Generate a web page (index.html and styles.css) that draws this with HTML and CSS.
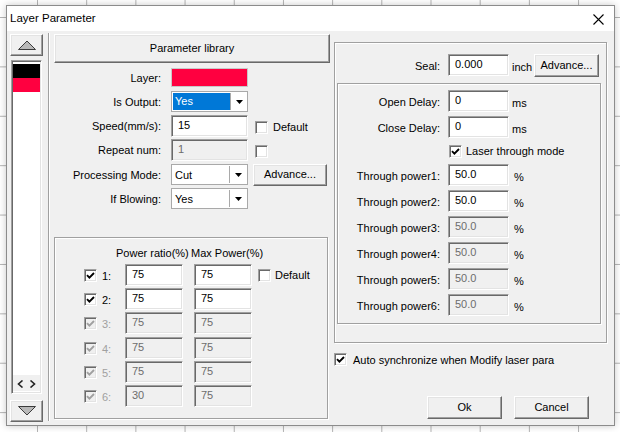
FILE: index.html
```html
<!DOCTYPE html>
<html>
<head>
<meta charset="utf-8">
<title>Layer Parameter</title>
<link rel="stylesheet" href="styles.css">
</head>
<body>
<div class="dialog">
  <div class="titlebar">
    <span class="title">Layer Parameter</span>
    <svg class="close" width="11" height="11" viewBox="0 0 11 11"><path d="M0.5 0.5 L10.5 10.5 M10.5 0.5 L0.5 10.5" stroke="#000" stroke-width="1.1" fill="none"/></svg>
  </div>
  <div class="body">
    <div class="layers">
      <div class="btn arrowbtn"><svg width="20" height="10" viewBox="0 0 20 10"><path d="M1.5 9.5 L10 1 L18.5 9.5 Z" fill="#b9b9b9" stroke="#3c3c3c" stroke-width="1"/></svg></div>
      <div class="layerlist sunk">
        <div class="lyr lyr-black"></div>
        <div class="lyr lyr-red"></div>
        <div class="lspace"></div>
        <div class="hscroll">
          <svg width="7" height="8" viewBox="0 0 7 8"><path d="M5.5 0.5 L1.5 4 L5.5 7.5" stroke="#222" stroke-width="1.6" fill="none"/></svg>
          <svg width="7" height="8" viewBox="0 0 7 8"><path d="M1.5 0.5 L5.5 4 L1.5 7.5" stroke="#222" stroke-width="1.6" fill="none"/></svg>
        </div>
      </div>
      <div class="btn arrowbtn down"><svg width="20" height="10" viewBox="0 0 20 10"><path d="M1.5 0.5 L10 9 L18.5 0.5 Z" fill="#b9b9b9" stroke="#3c3c3c" stroke-width="1"/></svg></div>
    </div>

    <div class="vsep"></div>

    <div class="mid">
      <div class="btn libbtn">Parameter library</div>
      <div class="form">
        <div class="row"><span class="lbl">Layer:</span><span class="swatch"></span></div>
        <div class="row"><span class="lbl">Is Output:</span>
          <div class="combo"><span class="ctext"><span class="sel">Yes</span></span><span class="cbtn"><svg width="7" height="4" viewBox="0 0 7 4"><path d="M0 0 H7 L3.5 4 Z" fill="#000"/></svg></span></div>
        </div>
        <div class="row"><span class="lbl">Speed(mm/s):</span><span class="field sunk">15</span>
          <span class="chk sunk ml7"></span><span class="ctl">Default</span></div>
        <div class="row"><span class="lbl">Repeat num:</span><span class="field sunk dis">1</span>
          <span class="chk sunk ml7"></span></div>
        <div class="row"><span class="lbl">Processing Mode:</span>
          <div class="combo"><span class="ctext">Cut</span><span class="cbtn"><svg width="7" height="4" viewBox="0 0 7 4"><path d="M0 0 H7 L3.5 4 Z" fill="#000"/></svg></span></div>
          <span class="btn advbtn">Advance...</span>
        </div>
        <div class="row"><span class="lbl">If Blowing:</span>
          <div class="combo"><span class="ctext">Yes</span><span class="cbtn"><svg width="7" height="4" viewBox="0 0 7 4"><path d="M0 0 H7 L3.5 4 Z" fill="#000"/></svg></span></div>
        </div>
      </div>

      <div class="group power">
        <div class="phdr"><span class="ph1">Power ratio(%)</span><span>Max Power(%)</span></div>
        <div class="prows">
          <div class="prow"><span class="chk sunk on"><svg viewBox="0 0 9 9" width="9" height="9"><path d="M1 4.2 L3.4 6.6 L8 2" fill="none" stroke="currentColor" stroke-width="1.9"/></svg></span><span class="num">1:</span><span class="pf sunk">75</span><span class="pf sunk pf2">75</span><span class="chk sunk ml6"></span><span class="ctl4">Default</span></div>
          <div class="prow"><span class="chk sunk on"><svg viewBox="0 0 9 9" width="9" height="9"><path d="M1 4.2 L3.4 6.6 L8 2" fill="none" stroke="currentColor" stroke-width="1.9"/></svg></span><span class="num">2:</span><span class="pf sunk">75</span><span class="pf sunk pf2">75</span></div>
          <div class="prow off"><span class="chk sunk on"><svg viewBox="0 0 9 9" width="9" height="9"><path d="M1 4.2 L3.4 6.6 L8 2" fill="none" stroke="currentColor" stroke-width="1.9"/></svg></span><span class="num">3:</span><span class="pf sunk">75</span><span class="pf sunk pf2">75</span></div>
          <div class="prow off"><span class="chk sunk on"><svg viewBox="0 0 9 9" width="9" height="9"><path d="M1 4.2 L3.4 6.6 L8 2" fill="none" stroke="currentColor" stroke-width="1.9"/></svg></span><span class="num">4:</span><span class="pf sunk">75</span><span class="pf sunk pf2">75</span></div>
          <div class="prow off"><span class="chk sunk on"><svg viewBox="0 0 9 9" width="9" height="9"><path d="M1 4.2 L3.4 6.6 L8 2" fill="none" stroke="currentColor" stroke-width="1.9"/></svg></span><span class="num">5:</span><span class="pf sunk">75</span><span class="pf sunk pf2">75</span></div>
          <div class="prow off"><span class="chk sunk on"><svg viewBox="0 0 9 9" width="9" height="9"><path d="M1 4.2 L3.4 6.6 L8 2" fill="none" stroke="currentColor" stroke-width="1.9"/></svg></span><span class="num">6:</span><span class="pf sunk">30</span><span class="pf sunk pf2">75</span></div>
        </div>
      </div>
    </div>

    <div class="right">
      <div class="group outer">
        <div class="sealrow"><span class="rlbl seal">Seal:</span><span class="rf sunk">0.000</span><span class="unit">inch</span><span class="btn adv2">Advance...</span></div>
        <div class="group inner">
          <div class="rrow"><span class="rlbl">Open Delay:</span><span class="rf sunk">0</span><span class="u3">ms</span></div>
          <div class="rrow"><span class="rlbl">Close Delay:</span><span class="rf sunk">0</span><span class="u3">ms</span></div>
          <div class="crow"><span class="chk sunk on"><svg viewBox="0 0 9 9" width="9" height="9"><path d="M1 4.2 L3.4 6.6 L8 2" fill="none" stroke="currentColor" stroke-width="1.9"/></svg></span><span class="ctl4">Laser through mode</span></div>
          <div class="rrow"><span class="rlbl">Through power1:</span><span class="rf sunk">50.0</span><span class="u5">%</span></div>
          <div class="rrow"><span class="rlbl">Through power2:</span><span class="rf sunk">50.0</span><span class="u5">%</span></div>
          <div class="rrow"><span class="rlbl">Through power3:</span><span class="rf sunk dis">50.0</span><span class="u5">%</span></div>
          <div class="rrow"><span class="rlbl">Through power4:</span><span class="rf sunk dis">50.0</span><span class="u5">%</span></div>
          <div class="rrow"><span class="rlbl">Through power5:</span><span class="rf sunk dis">50.0</span><span class="u5">%</span></div>
          <div class="rrow"><span class="rlbl">Through power6:</span><span class="rf sunk dis">50.0</span><span class="u5">%</span></div>
        </div>
      </div>
      <div class="autorow"><span class="chk sunk on"><svg viewBox="0 0 9 9" width="9" height="9"><path d="M1 4.2 L3.4 6.6 L8 2" fill="none" stroke="currentColor" stroke-width="1.9"/></svg></span><span class="ctl6">Auto synchronize when Modify laser para</span></div>
      <div class="btnrow"><span class="btn okbtn">Ok</span><span class="btn okbtn">Cancel</span></div>
    </div>
  </div>
</div>
</body>
</html>
```
FILE: styles.css
```css
* { box-sizing: border-box; }
html, body { margin: 0; padding: 0; }
body {
  width: 620px;
  height: 432px;
  overflow: hidden;
  position: relative;
  font-family: "Liberation Sans", Arial, sans-serif;
  font-size: 11px;
  color: #000;
  background-color: #fff;
  background-image:
    linear-gradient(to right, #b4b4b4 1px, transparent 1px),
    linear-gradient(to bottom, #b4b4b4 1px, transparent 1px);
  background-size: 49.2px 100%, 100% 49.4px;
  background-position: 37px 0, 0 17px;
}

.dialog {
  position: absolute;
  left: 6px;
  top: 5px;
  width: 609px;
  height: 421px;
  border: 1px solid #8c8c8c;
  background: #f0f0f0;
  box-shadow: 0 0 7px rgba(0,0,0,0.22);
  display: flex;
  flex-direction: column;
}
.titlebar {
  height: 25px;
  flex: none;
  background: #fff;
  display: flex;
  align-items: center;
  justify-content: space-between;
  padding: 0 10px 0 3px;
}
.title { font-size: 11.5px; padding-bottom: 1px; }
.close { display: block; margin-top: 1px; }

.body {
  flex: 1;
  display: flex;
  padding: 3px 0 0 3px;
}

/* 3D styles */
.sunk {
  border-style: solid;
  border-width: 1px;
  border-color: #a0a0a0 #fff #fff #a0a0a0;
  box-shadow: inset 1px 1px 0 #696969, inset -1px -1px 0 #e3e3e3;
  background: #fff;
}
.btn {
  border-style: solid;
  border-width: 1px;
  border-color: #fff #696969 #696969 #fff;
  box-shadow: inset -1px -1px 0 #a0a0a0, inset 1px 1px 0 #e3e3e3;
  background: #f0f0f0;
  display: flex;
  align-items: center;
  justify-content: center;
  flex: none;
}
.group {
  border: 1px solid #a0a0a0;
  box-shadow: inset 1px 1px 0 #fff, 1px 1px 0 #fff;
}

/* left layer strip */
.layers {
  width: 33px;
  flex: none;
  display: flex;
  flex-direction: column;
}
.arrowbtn { height: 22px; }
.arrowbtn svg { display: block; }
.arrowbtn.down { margin-top: 6px; }
.layerlist {
  margin: 4px 1px 0;
  height: 334px;
  padding: 2px 1px 2px 1px;
  display: flex;
  flex-direction: column;
}
.lyr { height: 14px; flex: none; }
.lyr-black { background: #000; margin-top: 1px; }
.lyr-red { background: #ff0040; }
.lspace { flex: 1; }
.hscroll {
  height: 16px;
  flex: none;
  background: #f0f0f0;
  display: flex;
  align-items: center;
  justify-content: space-around;
  padding: 1px 2px 0;
}
.hscroll svg { display: block; }

.vsep {
  width: 2px;
  flex: none;
  margin: -1px 0 0 5px;
  height: 388px;
  border-left: 1px solid #a0a0a0;
  border-right: 1px solid #fff;
}

/* middle column */
.mid {
  width: 276px;
  flex: none;
  margin-left: 4px;
  display: flex;
  flex-direction: column;
}
.libbtn { height: 29px; padding-bottom: 1px; }
.form {
  display: flex;
  flex-direction: column;
  gap: 3.3px;
  margin-top: 4px;
}
.row {
  height: 21px;
  display: flex;
  align-items: center;
}
.lbl {
  width: 107px;
  flex: none;
  text-align: right;
  margin-right: 10px;
}
.swatch {
  width: 77px;
  height: 19px;
  background: #ff0040;
  border: 1px solid #c8c8c8;
}
.field {
  width: 77px;
  height: 22px;
  flex: none;
  padding: 0 0 2px 6px;
  display: flex;
  align-items: center;
}
.dis { background: #f0f0f0; color: #6d6d6d; }
.combo {
  width: 77px;
  height: 21px;
  flex: none;
  display: flex;
  padding: 1px;
  border: 1px solid #a9a9a9;
  background: #fff;
}
.ctext {
  flex: 1;
  display: flex;
  align-items: center;
  padding-left: 2px;
}
.sel {
  background: #0078d7;
  color: #fff;
  width: 57px;
  height: 17px;
  margin-left: -2px;
  padding-left: 2px;
  line-height: 16px;
}
.cbtn {
  width: 17px;
  border-left: 1px solid #a9a9a9;
  display: flex;
  align-items: center;
  justify-content: center;
  padding-left: 1px;
}
.cbtn svg { display: block; }
.advbtn { width: 74px; height: 22px; margin-left: 5px; padding-bottom: 1px; }

.chk {
  width: 13px;
  height: 13px;
  flex: none;
  display: flex;
  align-items: center;
  justify-content: center;
  color: #000;
}
.chk svg { display: block; }
.ml7 { margin-left: 7px; margin-top: 2px; }
.ml6 { margin-left: 6px; margin-top: 2px; }
.ctl { margin-left: 5px; margin-top: 2px; }
.ctl4 { margin-left: 4px; }
.ctl6 { margin-left: 6px; }

/* power group */
.power {
  margin-top: 27.5px;
  width: 274px;
  height: 182px;
  padding: 8px 0 0 29px;
}
.phdr {
  height: 14px;
  line-height: 14px;
  display: flex;
  padding-left: 32px;
}
.ph1 { width: 75px; }
.prows {
  margin-top: 4px;
  display: flex;
  flex-direction: column;
  gap: 2.2px;
}
.prow {
  height: 22px;
  display: flex;
  align-items: center;
}
.prow > .chk { margin-top: 1px; }
.num { width: 23px; margin-left: 5px; margin-top: 2px; }
.pf {
  width: 58px;
  height: 22px;
  flex: none;
  padding: 0 0 2px 6px;
  display: flex;
  align-items: center;
}
.pf2 { margin-left: 11px; }
.prow.off .chk { background: #f0f0f0; color: #a0a0a0; }
.prow.off .num { color: #a0a0a0; }
.prow.off .pf { background: #f0f0f0; color: #6d6d6d; }

/* right column */
.right {
  width: 273px;
  flex: none;
  margin-left: 4px;
  display: flex;
  flex-direction: column;
}
.outer {
  margin-top: 8px;
  height: 301px;
  padding-top: 11px;
}
.sealrow {
  height: 23px;
  display: flex;
  align-items: flex-start;
}
.sealrow .rlbl { align-self: center; }
.rlbl {
  flex: none;
  text-align: right;
  margin-right: 8px;
}
.seal { width: 105px; }
.rf {
  width: 61px;
  height: 22px;
  flex: none;
  padding: 0 0 2px 6px;
  display: flex;
  align-items: center;
}
.unit { width: 25px; padding-left: 3px; align-self: center; padding-top: 3px; }
.adv2 { width: 65px; height: 23px; padding-bottom: 1px; }

.inner {
  margin: 6px 0 0 2px;
  width: 264px;
  height: 241px;
  padding-top: 6px;
  display: flex;
  flex-direction: column;
  gap: 4px;
}
.rrow {
  height: 22px;
  display: flex;
  align-items: center;
}
.rrow .rlbl { width: 102px; margin-top: 2px; }
.u3 { margin-left: 3px; margin-top: 3px; }
.u5 { margin-left: 5px; margin-top: 3px; }
.crow {
  height: 18px;
  display: flex;
  align-items: center;
  padding-left: 111px;
}

.autorow {
  margin-top: 10px;
  height: 13px;
  display: flex;
  align-items: center;
}
.btnrow {
  margin-top: 30px;
  display: flex;
  justify-content: flex-end;
  gap: 12px;
  padding-right: 18px;
}
.okbtn { width: 75px; height: 23px; padding-bottom: 1px; }
```
